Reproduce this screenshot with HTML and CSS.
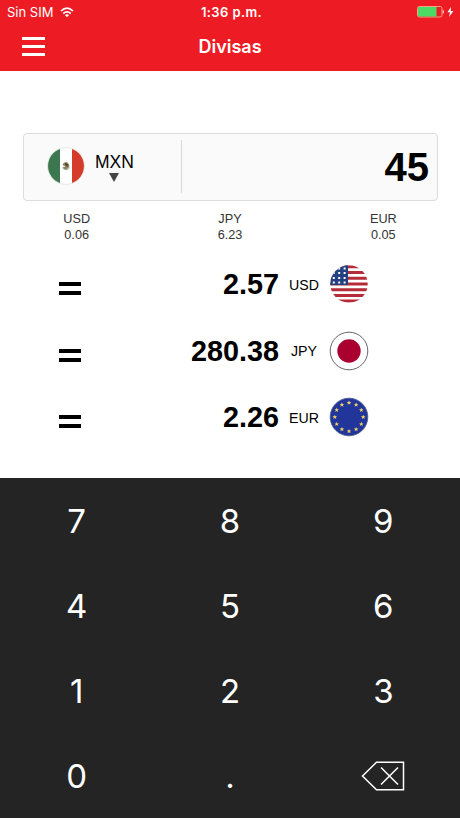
FILE: index.html
```html
<!DOCTYPE html>
<html lang="es">
<head>
<meta charset="utf-8">
<title>Divisas</title>
<link rel="stylesheet" href="styles.css">
</head>
<body>

    <header>
        <div class="status-bar">
            <div class="carrier">
                <span>Sin SIM</span>
                <svg width="14" height="11" viewBox="0 0 14 11" fill="none" stroke="#fff" stroke-width="1.7">
                    <path d="M1 4 Q7 -1.6 13 4"/>
                    <path d="M3.2 6.5 Q7 3.1 10.8 6.5"/>
                    <path d="M4.9 8.1 Q7 6.4 9.1 8.1 L7 10.3 Z" fill="#fff" stroke="none"/>
                </svg>
            </div>
            <span class="clock">1:36 p.m.</span>
            <div class="power">
                <svg width="37" height="12" viewBox="0 0 37 12">
                    <rect x="0.5" y="0.5" width="24.5" height="10.5" rx="1.8" fill="none" stroke="#f5a08c"/>
                    <path d="M2 1 H19.5 V10.5 H2 Q1 10.5 1 9.5 V2 Q1 1 2 1 Z" fill="#4cd964"/>
                    <path d="M25.8 3.7 Q28 5.8 25.8 7.9 Z" fill="#fff"/>
                    <path d="M34 0.7 L30.5 6.3 H33.1 L32 11 L36.4 5 H33.7 Z" fill="#fff"/>
                </svg>
            </div>
        </div>
        <div class="nav-bar">
            <button class="menu" aria-label="Menú"><i></i><i></i><i></i></button>
            <h1>Divisas</h1>
        </div>
    </header>

    <main>
        <div class="amount-box">
            <div class="currency">
                <svg width="38" height="38" viewBox="0 0 38 38">
                    <clipPath id="round"><circle cx="19" cy="19" r="18.3"/></clipPath>
                    <g clip-path="url(#round)">
                        <rect width="38" height="38" fill="#fff"/>
                        <rect width="13" height="38" fill="#3d7750"/>
                        <rect x="25" width="13" height="38" fill="#d53a2d"/>
                    </g>
                    <circle cx="19" cy="19" r="18.4" fill="none" stroke="#dce8e0" stroke-width="0.8"/>
                    <path d="M15.5 18 Q16.5 15 19.5 15 Q22.8 16.5 22.3 20 L20 22 Q17 22.8 15.5 20.5 L18.5 19.5 Z" fill="#8c8061"/>
                    <path d="M18 16 L21 17 L20.5 20 L18.5 18.5 Z" fill="#4d4934"/>
                    <path d="M15.5 21 Q19 24.5 22.5 21" fill="none" stroke="#8fb09a"/>
                </svg>
                <div class="code">
                    <span>MXN</span>
                    <svg width="10" height="9" viewBox="0 0 10 9"><path d="M0 0 H10 L5 9 Z" fill="#444"/></svg>
                </div>
            </div>
            <div class="amount">45</div>
        </div>

        <div class="rates">
            <div>USD<br>0.06</div>
            <div>JPY<br>6.23</div>
            <div>EUR<br>0.05</div>
        </div>

        <div class="results">
            <div class="result">
                <div class="equals"><i></i><i></i></div>
                <span class="value">2.57</span>
                <span class="unit">USD</span>
                <svg width="40" height="40" viewBox="0 0 40 40">
                    <clipPath id="us"><circle cx="20" cy="20" r="18.7"/></clipPath>
                    <g clip-path="url(#us)">
                        <rect width="40" height="40" fill="#fff"/>
                        <path d="M0 2.8 H40 M0 8.6 H40 M0 14.3 H40 M0 20 H40 M0 25.7 H40 M0 31.4 H40 M0 37.1 H40" stroke="#b52b37" stroke-width="3"/>
                        <rect width="19" height="21" fill="#253f83"/>
                        <path d="M3.8 9 H19 M3.8 14 H19 M3.8 18.5 H19 M9.2 4.5 H19" stroke="#fff" stroke-width="2" stroke-dasharray="2 3.4"/>
                    </g>
                </svg>
            </div>
            <div class="result">
                <div class="equals"><i></i><i></i></div>
                <span class="value">280.38</span>
                <span class="unit">JPY</span>
                <svg width="40" height="40" viewBox="0 0 40 40">
                    <circle cx="20" cy="20" r="18.8" fill="#fff" stroke="#555" stroke-width="0.9"/>
                    <circle cx="20" cy="20" r="11.7" fill="#a9002f"/>
                </svg>
            </div>
            <div class="result">
                <div class="equals"><i></i><i></i></div>
                <span class="value">2.26</span>
                <span class="unit">EUR</span>
                <svg width="40" height="40" viewBox="0 0 40 40">
                    <defs><path id="star" d="M0 -2.3 L.7 -.7 H2.3 L1 .4 L1.5 2 L0 1 L-1.5 2 L-1 .4 L-2.3 -.7 H-.7 Z"/></defs>
                    <circle cx="20" cy="20" r="18.8" fill="#22359a" stroke="#4b5a8c" stroke-width="0.9"/>
                    <g fill="#f0d264">
                        <use href="#star" x="20" y="5.8"/><use href="#star" x="27.1" y="7.7"/>
                        <use href="#star" x="32.3" y="12.9"/><use href="#star" x="34.2" y="20"/>
                        <use href="#star" x="32.3" y="27.1"/><use href="#star" x="27.1" y="32.3"/>
                        <use href="#star" x="20" y="34.2"/><use href="#star" x="12.9" y="32.3"/>
                        <use href="#star" x="7.7" y="27.1"/><use href="#star" x="5.8" y="20"/>
                        <use href="#star" x="7.7" y="12.9"/><use href="#star" x="12.9" y="7.7"/>
                    </g>
                </svg>
            </div>
        </div>
    </main>

    <div class="keypad">
        <button>7</button>
        <button>8</button>
        <button>9</button>
        <button>4</button>
        <button>5</button>
        <button>6</button>
        <button>1</button>
        <button>2</button>
        <button>3</button>
        <button>0</button>
        <button>.</button>
        <button aria-label="Borrar">
            <svg width="44" height="30" viewBox="0 0 44 30" fill="none" stroke="#fff" stroke-width="1.5">
                <path d="M1.5 15 L15.5 1.3 H42.5 V28.7 H15.5 Z"/>
                <path d="M20 6.5 L37 23.5 M37 6.5 L20 23.5"/>
            </svg>
        </button>
    </div>

</body>
</html>
```

FILE: styles.css
```css
body {
    background-color: white;
    color: black;
    display: flex;
    flex-direction: column;
    font-family: "Liberation Sans", Arial, sans-serif;
    height: 818px;
    margin: 0;
    overflow: hidden;
}

button {
    background: none;
    border: none;
    color: white;
    padding: 0;
}

svg {
    display: block;
}

header {
    background-color: #ed1c24;
    box-sizing: border-box;
    color: white;
    font-family: Inter, sans-serif;
    height: 71px;
}

.status-bar {
    align-items: center;
    display: grid;
    font-size: 13px;
    grid-template-columns: 1fr auto 1fr;
    height: 24px;
    padding: 0 6px 0 7px;
}

.carrier {
    align-items: center;
    display: flex;
    gap: 7px;
}

.clock {
    font-weight: 600;
    letter-spacing: 0.4px;
    padding-left: 2px;
}

.power {
    justify-self: end;
}

.nav-bar {
    align-items: center;
    display: grid;
    grid-template-columns: 1fr auto 1fr;
    height: 45px;
    padding: 0 22px;
}

.menu {
    display: flex;
    flex-direction: column;
    gap: 5px;
    width: 23px;
}

.menu i {
    background-color: white;
    height: 3px;
    width: 100%;
}

h1 {
    font-size: 18px;
    font-weight: 600;
    margin: 0;
}

main {
    flex: 1;
}

.amount-box {
    background-color: #fafafa;
    border: 1px solid #dcdcdc;
    border-radius: 4px;
    box-sizing: border-box;
    display: flex;
    height: 68px;
    margin: 62px 22px 0 23px;
    padding: 6px 8px 7px 0;
}

.currency {
    border-right: 1px solid #d8d8d8;
    box-sizing: border-box;
    display: flex;
    gap: 10px;
    padding: 7px 0 0 23px;
    width: 158px;
}

.code {
    align-items: center;
    display: flex;
    flex-direction: column;
    font-size: 17.5px;
    gap: 1px;
    line-height: 20px;
    padding-top: 5px;
}

.amount {
    flex: 1;
    font-size: 40px;
    font-weight: bold;
    line-height: 55px;
    text-align: right;
}

.rates {
    color: #333;
    display: grid;
    font-size: 12.7px;
    grid-template-columns: repeat(3, 1fr);
    line-height: 16px;
    margin-top: 10px;
    text-align: center;
}

.results {
    margin-top: 8px;
}

.result {
    align-items: center;
    display: grid;
    grid-template-columns: 22px 198px 50px 40px;
    height: 66.5px;
    padding-left: 59px;
}

.equals {
    display: flex;
    flex-direction: column;
    gap: 5px;
    padding-top: 9px;
}

.equals i {
    background-color: black;
    height: 4px;
}

.value {
    font-size: 28.8px;
    font-weight: bold;
    padding-top: 1px;
    text-align: right;
}

.unit {
    font-size: 14.2px;
    padding-top: 1px;
    text-align: center;
}

.keypad {
    background-color: #242424;
    display: grid;
    grid-template-columns: repeat(3, 1fr);
    grid-template-rows: repeat(4, 85px);
}

.keypad button {
    align-items: center;
    display: flex;
    font-family: Inter, sans-serif;
    font-size: 33px;
    justify-content: center;
}
```
